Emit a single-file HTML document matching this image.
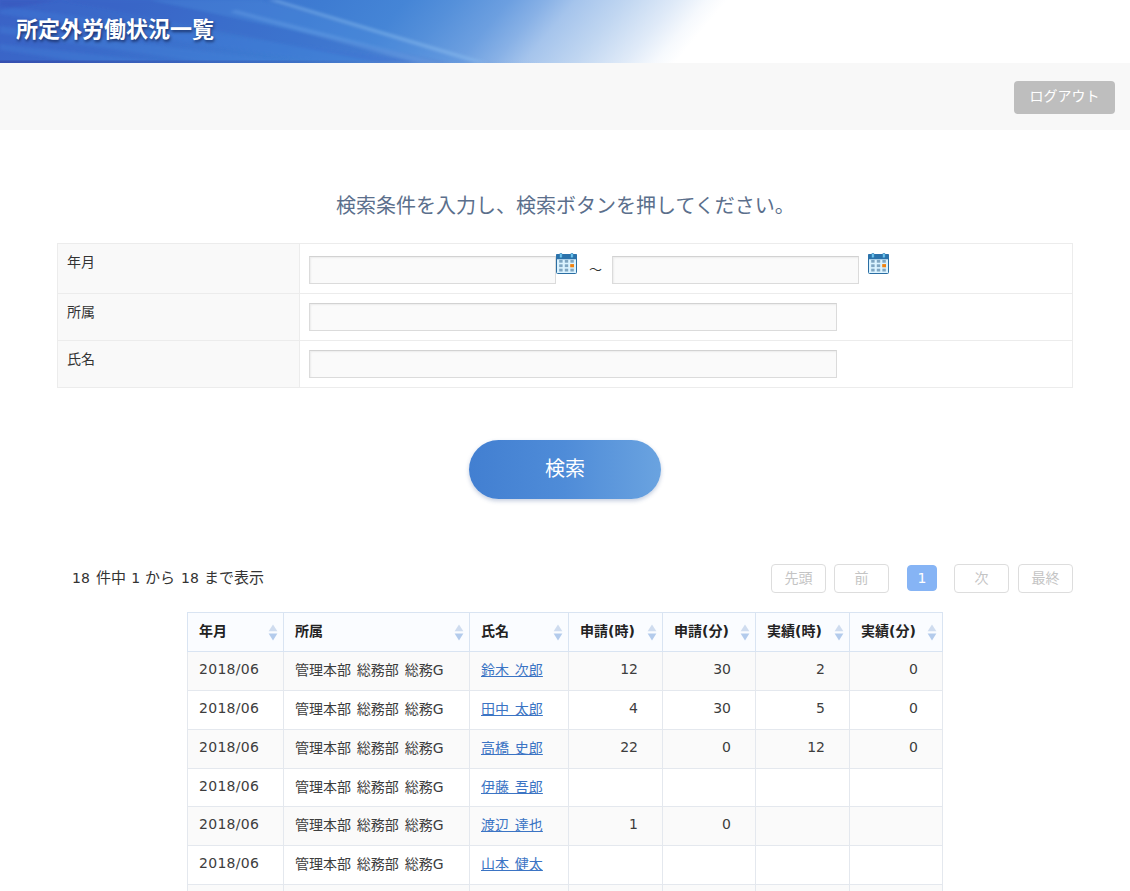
<!DOCTYPE html>
<html lang="ja">
<head>
<meta charset="utf-8">
<title>所定外労働状況一覧</title>
<style>
*{box-sizing:border-box;margin:0;padding:0}
html,body{width:1130px;height:891px;overflow:hidden;background:#fff}
body{position:relative;font-family:"DejaVu Sans","Noto Sans CJK JP",sans-serif;font-size:14px;color:#333}
.hdr{position:absolute;left:0;top:0;width:1130px;height:63px;overflow:hidden;
background:linear-gradient(130deg,#3a62c6 0%,#3a6bca 12%,#3e7cd2 27.6%,#4585d6 34.4%,#5590da 38.6%,#6c9fe0 43.1%,#88b1e6 46.2%,#a5c4ec 48.7%,#c0d6f1 53%,#dfeaf8 57.2%,#f6f9fd 59.8%,#ffffff 61.5%,#ffffff 100%)}
.hdr svg{position:absolute;left:0;top:0}
.hdr h1{position:absolute;left:16px;top:15px;font-family:"Liberation Sans","Noto Sans CJK JP",sans-serif;font-size:22px;line-height:30px;font-weight:bold;color:#fff;text-shadow:1px 2px 3px rgba(0,0,30,.55);white-space:nowrap}
.bar{position:absolute;left:0;top:63px;width:1130px;height:67px;background:#f8f8f8}
.logout{position:absolute;left:1014px;top:18px;width:101px;height:33px;border-radius:4px;background:#bebebe;color:#fff;font-size:14px;line-height:31px;text-align:center;font-family:"Liberation Sans","Noto Sans CJK JP",sans-serif}
.msg{position:absolute;left:336px;top:190px;font-family:"Liberation Sans","Noto Sans CJK JP",sans-serif;font-size:20px;line-height:32px;color:#5b6f8c;white-space:nowrap}
.form{position:absolute;left:57px;top:243px;width:1016px;height:145px;border:1px solid #ececec;background:#fff}
.form .row{position:absolute;left:0;width:1014px;border-top:1px solid #ececec}
.form .lab{position:absolute;left:0;top:0;width:242px;height:100%;background:#f9f9f9;border-right:1px solid #ececec;padding:9px 0 0 9px;font-size:14px;line-height:18px;font-family:"Liberation Sans","Noto Sans CJK JP",sans-serif;color:#333}
.inp{position:absolute;height:28px;background:#fafafa;border:1px solid #dbdbdb;border-top-color:#d2d2d2;box-shadow:inset 1px 1px 2px rgba(0,0,0,.06)}
.tilde{position:absolute;font-family:"Liberation Sans","Noto Sans CJK JP",sans-serif;font-size:13px;line-height:20px;color:#333}
.cal{position:absolute;width:22px;height:22px}
.btn{position:absolute;left:469px;top:440px;width:192px;height:59px;border-radius:30px;background:linear-gradient(90deg,#427fd1 0%,#4f8cd8 50%,#6aa3e0 100%);box-shadow:0 2px 4px rgba(60,90,150,.3);color:#fff;font-size:20px;line-height:59px;text-align:center;font-family:"Liberation Sans","Noto Sans CJK JP",sans-serif}
.info{position:absolute;left:72px;top:567px;font-size:15px;word-spacing:1.5px;line-height:22px;color:#333;white-space:nowrap}
.info span{font-size:14px;position:relative}
.info i{font-style:normal;position:relative}
.pg{position:absolute;top:564px;height:29px;border:1px solid #ddd;border-radius:4px;background:#fff;color:#c4c4c4;font-size:14px;line-height:27px;text-align:center;font-family:"Liberation Sans","Noto Sans CJK JP",sans-serif}
.pg.cur{top:565px;height:26px;line-height:24px;background:#86b4f5;border-color:#86b4f5;color:#fff;font-family:"DejaVu Sans",sans-serif;font-size:14px}
table.dt{position:absolute;left:187px;top:612px;border-collapse:collapse;table-layout:fixed;width:755px;font-size:14px}
table.dt th,table.dt td{border:1px solid #e4e8ee;height:39px;padding:0 10px 4px 11px;word-spacing:1.4px;white-space:nowrap;overflow:hidden;font-weight:normal;text-align:left;vertical-align:middle;color:#3d3d3d}
table.dt th{background:#fafcff;border-color:#d9e4f2;font-weight:bold;font-family:"DejaVu Sans","Noto Sans CJK JP",sans-serif;font-size:14px;position:relative;height:39px;padding-bottom:4px;color:#222}
table.dt tr:nth-child(odd) td{background:#fafafa}
table.dt tbody tr:nth-child(4) td{height:38px}
table.dt td:first-child{letter-spacing:.3px}
table.dt td.n{text-align:right;padding-right:24px}
table.dt td a{color:#3b74c4;text-decoration:underline}
.srt{position:absolute;right:5px;top:11px;width:10px;height:18px}
</style>
</head>
<body>
<div class="hdr">
<svg width="1130" height="63" viewBox="0 0 1130 63"><defs><filter id="bl" x="-5%" y="-50%" width="110%" height="200%"><feGaussianBlur stdDeviation="1.6"/></filter></defs>
<g filter="url(#bl)">
<polygon points="0,6 0,14 330,63 430,63" fill="#3f7ad6" opacity=".4"/>
<polygon points="0,26 0,33 210,63 300,63" fill="#4583da" opacity=".35"/>
<polygon points="0,44 0,50 90,63 170,63" fill="#4583da" opacity=".35"/>
<polygon points="60,0 150,0 450,63 380,63" fill="#3658c0" opacity=".22"/>
<polygon points="150,0 260,0 486,63 452,63" fill="#4a8ade" opacity=".25"/>
<polygon points="268,0 278,0 488,63 476,63" fill="#9ccaf6" opacity=".42"/>
<polygon points="230,12 236,10 440,63 418,63" fill="#7fb4ee" opacity=".3"/>
<polygon points="0,0 60,0 0,10" fill="#3550b8" opacity=".4"/>
</g>
<rect x="0" y="60.5" width="540" height="2.5" fill="url(#bt)"/>
<defs><linearGradient id="bt" x1="0" x2="1" y1="0" y2="0"><stop offset="0" stop-color="#3448a8" stop-opacity=".75"/><stop offset=".55" stop-color="#3b62b8" stop-opacity=".5"/><stop offset="1" stop-color="#8aa8d8" stop-opacity="0"/></linearGradient></defs>
</svg>
<h1>所定外労働状況一覧</h1>
</div>
<div class="bar"><div class="logout">ログアウト</div></div>
<div class="msg">検索条件を入力し、検索ボタンを押してください。</div>

<div class="form">
 <div class="row" style="top:-1px;height:51px"><div class="lab">年月</div>
  <div class="inp" style="left:251px;top:12px;width:247px"></div>
  <svg class="cal" style="left:498px;top:9px" viewBox="0 0 22 22"><rect x="0.5" y="1.5" width="20" height="19" rx="1" fill="#dbf3ff" stroke="#2b6ea3"/><rect x="0" y="1" width="21" height="5.2" rx="1" fill="#2b72ab"/><rect x="3.6" y="0.3" width="2.6" height="4.6" rx="1.2" fill="#6fcbf6" stroke="#2b6ea3" stroke-width=".6"/><rect x="14.6" y="0.3" width="2.6" height="4.6" rx="1.2" fill="#6fcbf6" stroke="#2b6ea3" stroke-width=".6"/><g fill="#7fa6c2"><rect x="3.2" y="6.9" width="3.4" height="2.8"/><rect x="8.8" y="6.9" width="3.4" height="2.8"/><rect x="14.4" y="6.9" width="3.4" height="2.8"/><rect x="3.2" y="11.3" width="3.4" height="2.8"/><rect x="8.8" y="11.3" width="3.4" height="2.8"/><rect x="3.2" y="15.7" width="3.4" height="2.8"/><rect x="8.8" y="15.7" width="3.4" height="2.8"/><rect x="14.4" y="15.7" width="3.4" height="2.8"/></g><rect x="14.2" y="11.1" width="3.8" height="3.2" fill="#f1820e"/></svg>
  <div class="tilde" style="left:531px;top:16px">～</div>
  <div class="inp" style="left:554px;top:12px;width:247px"></div>
  <svg class="cal" style="left:810px;top:9px" viewBox="0 0 22 22"><rect x="0.5" y="1.5" width="20" height="19" rx="1" fill="#dbf3ff" stroke="#2b6ea3"/><rect x="0" y="1" width="21" height="5.2" rx="1" fill="#2b72ab"/><rect x="3.6" y="0.3" width="2.6" height="4.6" rx="1.2" fill="#6fcbf6" stroke="#2b6ea3" stroke-width=".6"/><rect x="14.6" y="0.3" width="2.6" height="4.6" rx="1.2" fill="#6fcbf6" stroke="#2b6ea3" stroke-width=".6"/><g fill="#7fa6c2"><rect x="3.2" y="6.9" width="3.4" height="2.8"/><rect x="8.8" y="6.9" width="3.4" height="2.8"/><rect x="14.4" y="6.9" width="3.4" height="2.8"/><rect x="3.2" y="11.3" width="3.4" height="2.8"/><rect x="8.8" y="11.3" width="3.4" height="2.8"/><rect x="3.2" y="15.7" width="3.4" height="2.8"/><rect x="8.8" y="15.7" width="3.4" height="2.8"/><rect x="14.4" y="15.7" width="3.4" height="2.8"/></g><rect x="14.2" y="11.1" width="3.8" height="3.2" fill="#f1820e"/></svg>
 </div>
 <div class="row" style="top:49px;height:48px"><div class="lab">所属</div>
  <div class="inp" style="left:251px;top:9px;width:528px"></div>
 </div>
 <div class="row" style="top:96px;height:47px"><div class="lab">氏名</div>
  <div class="inp" style="left:251px;top:9px;width:528px"></div>
 </div>
</div>

<div class="btn">検索</div>

<div class="info"><span>18</span> 件中 <span style="left:-1.2px">1</span> <i style="left:-2.6px">から</i> <span style="left:-2.9px">18</span> <i style="left:-3.9px">まで表示</i></div>
<div class="pg" style="left:771px;width:55px">先頭</div>
<div class="pg" style="left:834px;width:55px">前</div>
<div class="pg cur" style="left:907px;width:30px">1</div>
<div class="pg" style="left:954px;width:55px">次</div>
<div class="pg" style="left:1018px;width:55px">最終</div>

<table class="dt">
<colgroup><col style="width:96px"><col style="width:186px"><col style="width:99px"><col style="width:94px"><col style="width:93px"><col style="width:94px"><col style="width:93px"></colgroup>
<thead><tr><th>年月<svg class="srt" viewBox="0 0 10 18"><path d="M5 0.5L9.4 7.2H0.6z" fill="#cfdcef"/><path d="M5 16.5L9.4 9.6H0.6z" fill="#b3cbec"/></svg></th><th>所属<svg class="srt" viewBox="0 0 10 18"><path d="M5 0.5L9.4 7.2H0.6z" fill="#cfdcef"/><path d="M5 16.5L9.4 9.6H0.6z" fill="#b3cbec"/></svg></th><th>氏名<svg class="srt" viewBox="0 0 10 18"><path d="M5 0.5L9.4 7.2H0.6z" fill="#cfdcef"/><path d="M5 16.5L9.4 9.6H0.6z" fill="#b3cbec"/></svg></th><th>申請(時)<svg class="srt" viewBox="0 0 10 18"><path d="M5 0.5L9.4 7.2H0.6z" fill="#cfdcef"/><path d="M5 16.5L9.4 9.6H0.6z" fill="#b3cbec"/></svg></th><th>申請(分)<svg class="srt" viewBox="0 0 10 18"><path d="M5 0.5L9.4 7.2H0.6z" fill="#cfdcef"/><path d="M5 16.5L9.4 9.6H0.6z" fill="#b3cbec"/></svg></th><th>実績(時)<svg class="srt" viewBox="0 0 10 18"><path d="M5 0.5L9.4 7.2H0.6z" fill="#cfdcef"/><path d="M5 16.5L9.4 9.6H0.6z" fill="#b3cbec"/></svg></th><th>実績(分)<svg class="srt" viewBox="0 0 10 18"><path d="M5 0.5L9.4 7.2H0.6z" fill="#cfdcef"/><path d="M5 16.5L9.4 9.6H0.6z" fill="#b3cbec"/></svg></th></tr></thead>
<tbody>
<tr><td>2018/06</td><td>管理本部 総務部 総務G</td><td><a>鈴木 次郎</a></td><td class="n">12</td><td class="n">30</td><td class="n">2</td><td class="n">0</td></tr>
<tr><td>2018/06</td><td>管理本部 総務部 総務G</td><td><a>田中 太郎</a></td><td class="n">4</td><td class="n">30</td><td class="n">5</td><td class="n">0</td></tr>
<tr><td>2018/06</td><td>管理本部 総務部 総務G</td><td><a>高橋 史郎</a></td><td class="n">22</td><td class="n">0</td><td class="n">12</td><td class="n">0</td></tr>
<tr><td>2018/06</td><td>管理本部 総務部 総務G</td><td><a>伊藤 吾郎</a></td><td class="n"></td><td class="n"></td><td class="n"></td><td class="n"></td></tr>
<tr><td>2018/06</td><td>管理本部 総務部 総務G</td><td><a>渡辺 達也</a></td><td class="n">1</td><td class="n">0</td><td class="n"></td><td class="n"></td></tr>
<tr><td>2018/06</td><td>管理本部 総務部 総務G</td><td><a>山本 健太</a></td><td class="n"></td><td class="n"></td><td class="n"></td><td class="n"></td></tr>
<tr><td>2018/06</td><td>管理本部 総務部 総務G</td><td><a>中村 翔太</a></td><td class="n"></td><td class="n"></td><td class="n"></td><td class="n"></td></tr>
</tbody>
</table>
</body>
</html>
